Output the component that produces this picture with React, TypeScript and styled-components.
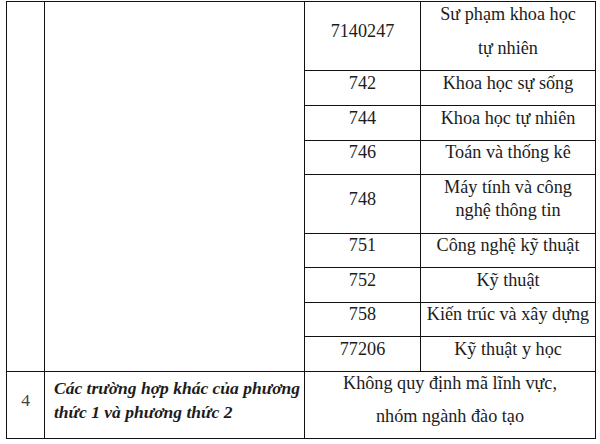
import React from "react";
import styled, { createGlobalStyle } from "styled-components";

const GlobalStyle = createGlobalStyle`
  html, body {
    margin: 0;
    padding: 0;
    background: #fff;
  }
  body {
    font-family: "Liberation Serif", "Times New Roman", serif;
    color: #1c1c1c;
  }
`;

const Page = styled.div`
  width: 600px;
  height: 444px;
  padding: 1px 0 0 6px;
  box-sizing: border-box;
  overflow: hidden;
`;

const Table = styled.table`
  border-collapse: separate;
  border-spacing: 0;
  table-layout: fixed;
  width: 590px;
  border-top: 1px solid #111;
  border-left: 1px solid #111;
  font-family: "Liberation Serif", "Times New Roman", serif;
  font-size: 18.2px;
  color: #1c1c1c;
`;

const Col = styled.col<{ $w: number }>`
  width: ${(p) => p.$w}px;
`;

const Row = styled.tr<{ $h: number }>`
  height: ${(p) => p.$h}px;
`;

const Cell = styled.td<{ $left?: boolean }>`
  box-sizing: border-box;
  padding: 0 0 10px ${(p) => (p.$left ? "9px" : "0")};
  border-right: 1px solid #111;
  border-bottom: 1px solid #111;
  vertical-align: middle;
  text-align: ${(p) => (p.$left ? "left" : "center")};
  white-space: nowrap;
  line-height: 23px;
`;

const Stack = styled.div<{ $gap?: number }>`
  display: flex;
  flex-direction: column;
  gap: ${(p) => p.$gap ?? 0}px;
`;

const Line = styled.span`
  display: block;
  height: 23px;
  line-height: 23px;
`;

const Note = styled(Line)`
  font-weight: bold;
  font-style: italic;
  font-size: 17.5px;
  height: 24px;
  line-height: 24px;
`;

const Index = styled(Line)`
  color: #444;
  font-size: 17.5px;
`;

type Field = { code: string; name: string[]; h: number };

const fields: Field[] = [
  { code: "7140247", name: ["Sư phạm khoa học", "tự nhiên"], h: 69 },
  { code: "742", name: ["Khoa học sự sống"], h: 35 },
  { code: "744", name: ["Khoa học tự nhiên"], h: 35 },
  { code: "746", name: ["Toán và thống kê"], h: 34 },
  { code: "748", name: ["Máy tính và công", "nghệ thông tin"], h: 59 },
  { code: "751", name: ["Công nghệ kỹ thuật"], h: 34 },
  { code: "752", name: ["Kỹ thuật"], h: 35 },
  { code: "758", name: ["Kiến trúc và xây dựng"], h: 34 },
  { code: "77206", name: ["Kỹ thuật y học"], h: 35 },
];

const App: React.FC = () => {
  return (
    <Page>
      <GlobalStyle />
      <Table>
        <colgroup>
          <Col $w={38} />
          <Col $w={260} />
          <Col $w={116} />
          <Col $w={175} />
        </colgroup>
        <tbody>
          {fields.map((f, i) => (
            <Row key={f.code} $h={f.h}>
              {i === 0 && (
                <>
                  <Cell rowSpan={fields.length} />
                  <Cell rowSpan={fields.length} />
                </>
              )}
              <Cell>
                <Line>{f.code}</Line>
              </Cell>
              <Cell>
                {/* the first row is spaced 1.5, the 748 row is single spaced */}
                <Stack $gap={i === 0 ? 11 : 0}>
                  {f.name.map((n) => (
                    <Line key={n}>{n}</Line>
                  ))}
                </Stack>
              </Cell>
            </Row>
          ))}
          <Row $h={67}>
            <Cell>
              <Index>4</Index>
            </Cell>
            <Cell $left>
              <Stack>
                <Note>Các trường hợp khác của phương</Note>
                <Note>thức 1 và phương thức 2</Note>
              </Stack>
            </Cell>
            <Cell colSpan={2}>
              <Stack $gap={10}>
                <Line>Không quy định mã lĩnh vực,</Line>
                <Line>nhóm ngành đào tạo</Line>
              </Stack>
            </Cell>
          </Row>
        </tbody>
      </Table>
    </Page>
  );
};

export default App;
